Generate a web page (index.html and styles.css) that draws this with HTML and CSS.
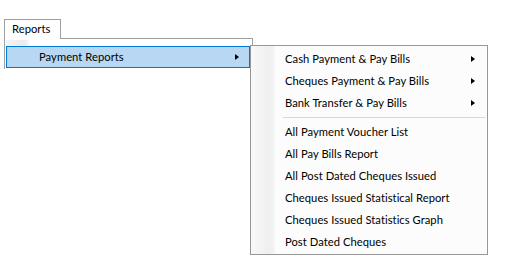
FILE: index.html
```html
<!DOCTYPE html>
<html>
<head>
<meta charset="utf-8">
<link rel="stylesheet" href="styles.css">
</head>
<body>
<div class="tabs">
  <div class="tab">Reports</div>
</div>
<div class="dropdown">
  <div class="gutter-top"></div>
  <div class="item hot">
    <span class="label">Payment Reports</span>
    <span class="arrow"></span>
  </div>
</div>
<div class="submenu">
  <div class="item"><span class="label">Cash Payment &amp; Pay Bills</span><span class="arrow"></span></div>
  <div class="item"><span class="label">Cheques Payment &amp; Pay Bills</span><span class="arrow"></span></div>
  <div class="item"><span class="label">Bank Transfer &amp; Pay Bills</span><span class="arrow"></span></div>
  <div class="sep"></div>
  <div class="item"><span class="label">All Payment Voucher List</span></div>
  <div class="item"><span class="label">All Pay Bills Report</span></div>
  <div class="item"><span class="label">All Post Dated Cheques Issued</span></div>
  <div class="item"><span class="label">Cheques Issued Statistical Report</span></div>
  <div class="item"><span class="label">Cheques Issued Statistics Graph</span></div>
  <div class="item"><span class="label">Post Dated Cheques</span></div>
</div>
</body>
</html>
```
FILE: styles.css
```css
html, body {
  margin: 0;
  padding: 0;
  background: #ffffff;
}
body {
  font-family: Lato, "Noto Sans", sans-serif;
  font-size: 11.2px;
  letter-spacing: 0.05px;
  color: #000;
  position: relative;
  width: 524px;
  height: 269px;
  overflow: hidden;
}
.tabs {
  display: flex;
  padding: 19px 0 0 4px;
}
.tab {
  position: relative;
  z-index: 2;
  width: 55px;
  height: 19px;
  border: 1px solid #a0a0a0;
  border-bottom: none;
  background: #fff;
  line-height: 17px;
  box-sizing: content-box;
  text-indent: 7px;
  margin-bottom: -1px;
}
.dropdown {
  margin-left: 4px;
  width: 245px;
  height: 29px;
  border: 1px solid #a0a0a0;
  border-bottom: none;
  padding: 1px 1px 0 1px;
  box-sizing: content-box;
  position: relative;
}
.gutter-top {
  width: 23px;
  height: 6px;
  background: linear-gradient(to right, #f4f4f4, #ebebeb 80%, #f8f8f8);
}
.item {
  display: flex;
  align-items: center;
  height: 22px;
  box-sizing: border-box;
  padding-left: 33px;
  padding-right: 11px;
  padding-bottom: 1px;
  position: relative;
}
.item .label {
  flex: 1;
  white-space: nowrap;
}
.item.hot {
  background: #b7d7f3;
  border: 1px solid #0078d7;
  padding-left: 32px;
  padding-right: 10px;
  width: 244px;
}
.arrow {
  width: 0;
  height: 0;
  border-top: 3.5px solid transparent;
  border-bottom: 3.5px solid transparent;
  border-left: 4px solid #000;
  margin-top: 1px;
}
.submenu {
  position: absolute;
  left: 250px;
  top: 45px;
  width: 234px;
  border: 1px solid #979797;
  background: linear-gradient(to right, #f8f8f8 0, #efefef 18px, #f3f3f3 23px, #fcfcfc 24px, #fcfcfc 100%);
  padding: 2px 1px 1px 1px;
  z-index: 3;
  box-sizing: content-box;
}
.submenu .item {
  padding-right: 11px;
}
.sep {
  height: 7px;
  display: flex;
  align-items: center;
  margin-left: 31px;
  margin-right: 1px;
}
.sep::before {
  content: "";
  flex: 1;
  height: 1px;
  background: #d7d7d7;
}
```
